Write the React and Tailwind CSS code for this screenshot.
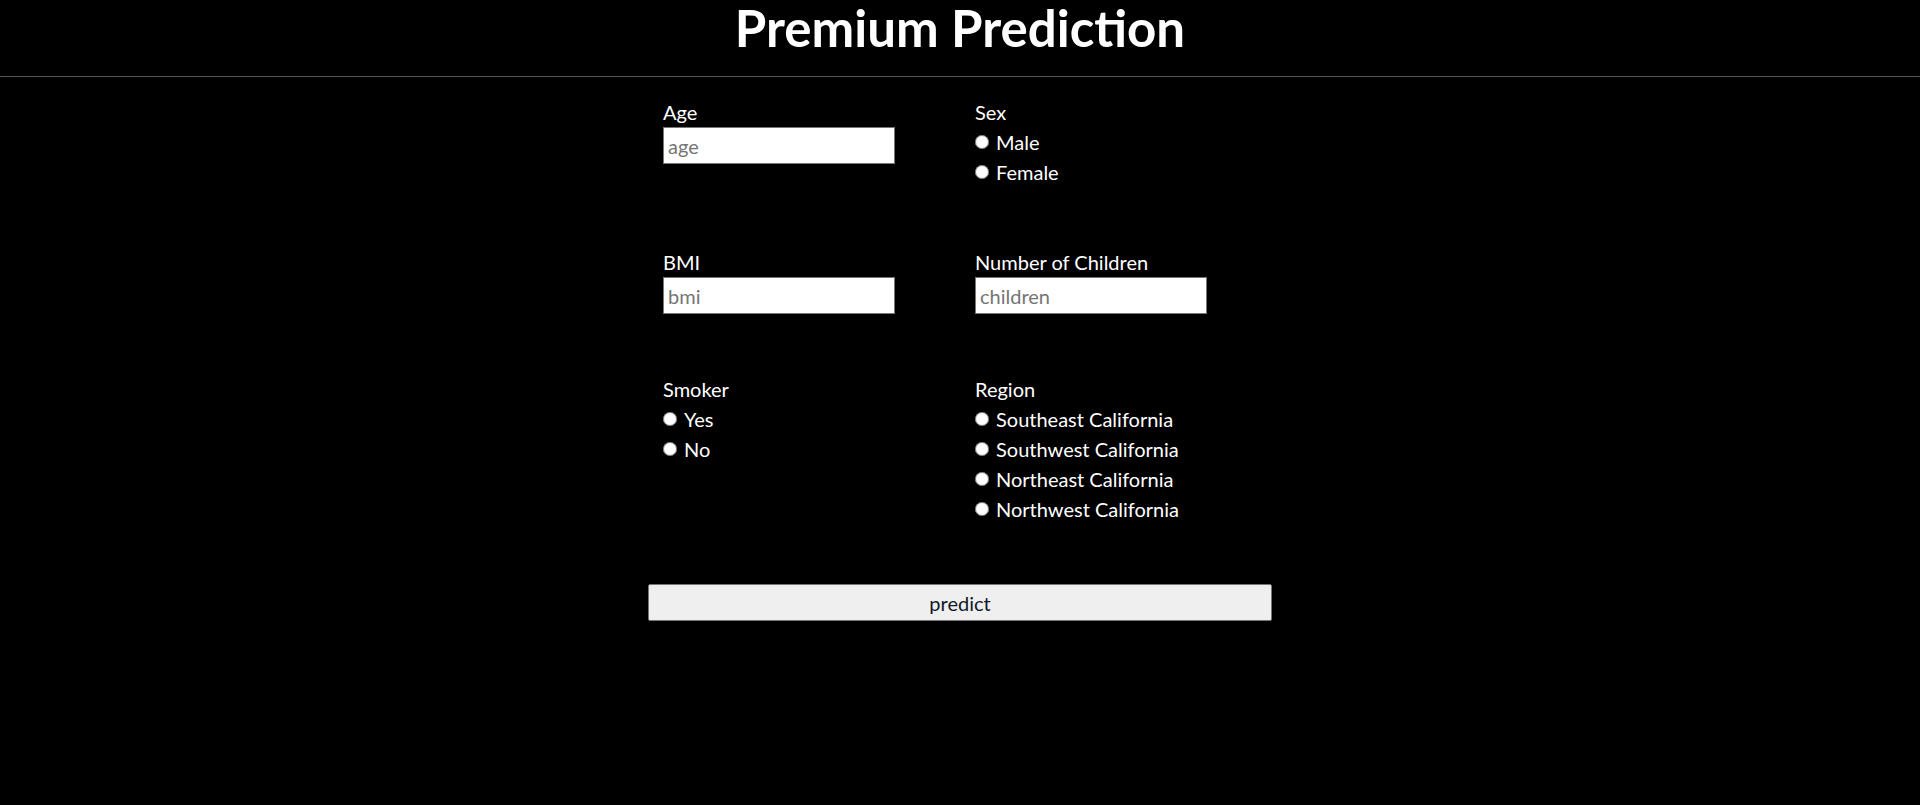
const FONT = "font-['Lato','Open_Sans',sans-serif]";

function TextField({ label, placeholder }) {
  return (
    <div className="flex flex-col">
      <label className="leading-[30px]">{label}</label>
      <input
        type="text"
        placeholder={placeholder}
        className="w-[232px] h-[37px] bg-white border border-[#767676] pl-[4px] text-[20px] text-black placeholder:text-[#757575] outline-none"
      />
    </div>
  );
}

function RadioGroup({ label, name, options }) {
  return (
    <div className="flex flex-col">
      <div className="leading-[30px]">{label}</div>
      {options.map((o) => (
        <label key={o} className="flex items-center gap-[7px] h-[30px] leading-[30px]">
          <input type="radio" name={name} value={o} className="w-[14px] h-[14px] m-0" />
          <span>{o}</span>
        </label>
      ))}
    </div>
  );
}

export default function App() {
  return (
    <div className={`min-h-[805px] bg-black text-white ${FONT}`}>
      {/* Header */}
      <div className="h-[77px] pt-[2px] border-b border-[#555555]">
        <h1 className="text-center text-[51px] leading-[51px] font-bold">Premium Prediction</h1>
      </div>

      {/* Form */}
      <form className="w-[624px] mx-auto mt-[20px] text-[20px]" onSubmit={(e) => e.preventDefault()}>
        <div className="grid grid-cols-2 gap-y-[60px]">
          <div className="px-[15px]">
            <TextField label="Age" placeholder="age" />
          </div>
          <div className="px-[15px]">
            <RadioGroup label="Sex" name="sex" options={["Male", "Female"]} />
          </div>

          <div className="px-[15px]">
            <TextField label="BMI" placeholder="bmi" />
          </div>
          <div className="px-[15px]">
            <TextField label="Number of Children" placeholder="children" />
          </div>

          <div className="px-[15px]">
            <RadioGroup label="Smoker" name="smoker" options={["Yes", "No"]} />
          </div>
          <div className="px-[15px]">
            <RadioGroup
              label="Region"
              name="region"
              options={[
                "Southeast California",
                "Southwest California",
                "Northeast California",
                "Northwest California",
              ]}
            />
          </div>

          <button
            type="submit"
            className="col-span-2 h-[37px] bg-[#efefef] border border-[#767676] rounded-[2px] text-[#111827] text-[20px] leading-none"
          >
            predict
          </button>
        </div>
      </form>
    </div>
  );
}
